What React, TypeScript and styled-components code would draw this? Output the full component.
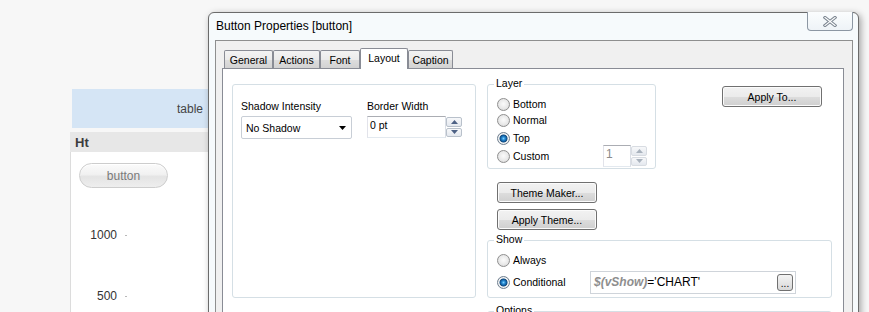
import React from 'react';
import styled, { createGlobalStyle, css } from 'styled-components';

const Global = createGlobalStyle`
  html, body { margin: 0; padding: 0; }
  body {
    background: #f7f7f7;
    font-family: "Liberation Sans", Arial, sans-serif;
    overflow: hidden;
  }
  * { box-sizing: border-box; }
`;

const Screen = styled.div`
  position: relative;
  width: 869px;
  height: 312px;
  overflow: hidden;
  background: #f7f7f7;
`;

/* ---------- background application ---------- */
const AppArea = styled.div`
  display: flex;
  flex-direction: column;
  padding: 89px 0 0 70px;
  width: 360px;
`;

const TableBar = styled.div`
  margin-left: 2px;
  height: 39px;
  background: #d5e5f5;
  display: flex;
  align-items: center;
  padding-left: 105px;
  font-size: 12px;
  color: #444;
`;

const Sheet = styled.div`
  margin-top: 4px;
  display: flex;
  flex-direction: column;
`;

const SheetHeader = styled.div`
  height: 20px;
  background: #e7e7e7;
  display: flex;
  align-items: center;
  padding-left: 5px;
  font-size: 13px;
  font-weight: bold;
  color: #3c3c3c;
`;

const SheetBody = styled.div`
  background: #fff;
  border-left: 1px solid #dcdcdc;
  height: 200px;
  display: flex;
  flex-direction: column;
`;

const PillButton = styled.div`
  margin: 11px 0 0 8px;
  width: 89px;
  height: 25px;
  border-radius: 13px;
  border: 1px solid #cdcdcd;
  background: linear-gradient(#fbfbfb 0%, #f1f1f1 45%, #e4e4e4 55%, #eeeeee 100%);
  box-shadow: inset 0 1px 0 #ffffff;
  display: flex;
  align-items: center;
  justify-content: center;
  font-size: 12px;
  color: #7a7a7a;
`;

const Axis = styled.div`
  margin-top: 40px;
  display: flex;
  flex-direction: column;
`;

const AxisRow = styled.div`
  height: 61px;
  display: flex;
  align-items: flex-start;
`;

const AxisLabel = styled.span`
  width: 46px;
  text-align: right;
  font-size: 12px;
  line-height: 14px;
  color: #333;
`;

const Tick = styled.span`
  margin: 7px 0 0 8px;
  width: 2px;
  height: 1px;
  background: #b8b8b8;
`;

/* ---------- dialog window ---------- */
const Dialog = styled.div`
  position: absolute;
  left: 208px;
  top: 12px;
  width: 651px;
  height: 320px;
  border: 1px solid #6b6b6b;
  border-radius: 6px 6px 0 0;
  background: #f6fafc;
  box-shadow: 2px 2px 7px rgba(0, 0, 0, 0.35);
  display: flex;
  flex-direction: column;
  font-size: 10.5px;
  color: #000;
`;

const TitleBar = styled.div`
  flex: none;
  height: 27px;
  display: flex;
  align-items: flex-start;
  padding-left: 7px;
`;

const Title = styled.span`
  font-size: 12px;
  line-height: 14px;
  margin-top: 6px;
  color: #000;
`;

const CloseButton = styled.div`
  margin: -1px 5px 0 auto;
  width: 46px;
  height: 19px;
  border: 1px solid #8c97a3;
  border-top: none;
  border-radius: 0 0 4px 4px;
  background: linear-gradient(#fbfdfe, #eef3f7);
  display: flex;
  align-items: center;
  justify-content: center;
`;

const Frame = styled.div`
  flex: 1;
  min-height: 0;
  margin: 0 5px 0 6px;
  border: 1px solid #8e8f8f;
  border-bottom: none;
  background: #f0f0f0;
  padding: 7px 8px 0 6px;
  display: flex;
  flex-direction: column;
`;

const TabStrip = styled.div`
  flex: none;
  margin-left: 2px;
  height: 20px;
  display: flex;
  align-items: flex-end;
`;

const Tab = styled.div<{ $active?: boolean; $w: number }>`
  width: ${p => p.$w}px;
  height: 18px;
  border: 1px solid #898c95;
  border-bottom: none;
  border-radius: 2px 2px 0 0;
  background: linear-gradient(#f3f3f3 0%, #ebebeb 50%, #dedede 51%, #d2d2d2 100%);
  display: flex;
  align-items: center;
  justify-content: center;
  font-size: 10.5px;
  ${p =>
    p.$active &&
    css`
      height: 21px;
      margin-bottom: -1px;
      background: #fff;
      position: relative;
      z-index: 1;
      padding-bottom: 3px;
    `}
`;

const Panel = styled.div`
  flex: 1;
  min-height: 0;
  background: #fff;
  border: 1px solid #898c95;
  padding: 15px 9px;
  display: flex;
  align-items: flex-start;
  gap: 11px;
`;

const GroupBox = styled.div<{ $w: number; $h: number; $mt?: number }>`
  position: relative;
  width: ${p => p.$w}px;
  height: ${p => p.$h}px;
  margin-top: ${p => p.$mt ?? 0}px;
  flex: none;
  border: 1px solid #d5dfe5;
  border-radius: 3px;
  display: flex;
  flex-direction: column;
`;

const Legend = styled.span`
  position: absolute;
  top: -8px;
  left: 6px;
  padding: 0 2px;
  background: #fff;
  line-height: 13px;
`;

const ShadowGroupInner = styled.div`
  padding: 15px 0 0 8px;
  display: flex;
  gap: 15px;
`;

const Field = styled.div`
  display: flex;
  flex-direction: column;
`;

const FieldLabel = styled.span`
  line-height: 13px;
  margin-bottom: 3px;
`;

const Combo = styled.div`
  width: 111px;
  height: 23px;
  border: 1px solid #c8ced6;
  border-radius: 2px;
  display: flex;
  align-items: center;
  padding: 0 5px 0 4px;
  justify-content: space-between;
`;

const SpinBox = styled.div`
  display: flex;
  height: 22px;
`;

const Edit = styled.div<{ $w: number; $disabled?: boolean }>`
  width: ${p => p.$w}px;
  height: 100%;
  border: 1px solid;
  border-color: #abadb3 #dbdfe6 #e3e9ef #e2e3ea;
  padding: 2px 0 0 2px;
  line-height: 13px;
  color: ${p => (p.$disabled ? '#8a8a8a' : '#000')};
  font-size: ${p => (p.$disabled ? '12px' : '10.5px')};
`;

const SpinButtons = styled.div`
  width: 16px;
  height: 100%;
  display: flex;
  flex-direction: column;
  gap: 1px;
  padding: 1px 0;
`;

const SpinButton = styled.div<{ $disabled?: boolean }>`
  flex: 1;
  border: 1px solid ${p => (p.$disabled ? '#d8dce2' : '#b9c1cb')};
  border-radius: 2px;
  background: linear-gradient(#f7f8fa, #e4e8ee);
  display: flex;
  align-items: center;
  justify-content: center;
`;

const RightColumn = styled.div`
  width: 345px;
  display: flex;
  flex-direction: column;
`;

const TopRow = styled.div`
  display: flex;
  align-items: flex-start;
`;

const RadioList = styled.div`
  padding: 11px 8px 0 9px;
  display: flex;
  flex-direction: column;
`;

const RadioRow = styled.div<{ $h?: number; $mt?: number }>`
  height: ${p => p.$h ?? 17}px;
  margin-top: ${p => p.$mt ?? 0}px;
  display: flex;
  align-items: center;
`;

const RadioDot = styled.span<{ $checked?: boolean }>`
  flex: none;
  width: 13px;
  height: 13px;
  border-radius: 50%;
  border: 1px solid #8f8f8f;
  background: radial-gradient(circle at 50% 45%, #fbfbfb 0%, #e9e9e9 55%, #cfcfcf 100%);
  margin-right: 3px;
  ${p =>
    p.$checked &&
    css`
      border-color: #6f7f90;
      background: radial-gradient(
        circle at 50% 50%,
        #7fd0ff 0px,
        #2b8ed4 1.5px,
        #0d5a9e 3px,
        #1c4f7c 3.6px,
        #e9eef2 4.4px,
        #f3f3f3 5px,
        #d3d3d3 6px
      );
    `}
`;

const RadioLabel = styled.span<{ $w?: number }>`
  line-height: 13px;
  ${p => p.$w && css`width: ${p.$w}px;`}
`;

const CustomSpin = styled.div`
  margin-left: auto;
  display: flex;
  height: 22px;
`;

const PushButton = styled.div<{ $w: number; $mt?: number; $ml?: number }>`
  flex: none;
  width: ${p => p.$w}px;
  height: 21px;
  margin-top: ${p => p.$mt ?? 0}px;
  margin-left: ${p => p.$ml ?? 0}px;
  border: 1px solid #707070;
  border-radius: 3px;
  background: linear-gradient(#f2f2f2 0%, #ebebeb 50%, #dddddd 51%, #cfcfcf 100%);
  box-shadow: inset 0 0 0 1px #fbfbfb;
  display: flex;
  align-items: center;
  justify-content: center;
  font-size: 10.5px;
`;

const ExprEdit = styled.div`
  width: 206px;
  height: 23px;
  border: 1px solid #cfd4da;
  display: flex;
  align-items: center;
  padding: 0 2px 0 3px;
  font-size: 12px;
`;

const ExprVar = styled.span`
  font-style: italic;
  font-weight: bold;
  color: #8e8e8e;
`;

const EllipsisButton = styled.div`
  margin-left: auto;
  width: 16px;
  height: 17px;
  border: 1px solid #707070;
  border-radius: 3px;
  background: linear-gradient(#f4f4f4, #d8d8d8);
  display: flex;
  align-items: flex-end;
  justify-content: center;
  font-size: 10px;
  line-height: 12px;
`;

const UpArrow = ({ color = '#4d6185' }: { color?: string }) => (
  <svg width="7" height="4" viewBox="0 0 7 4">
    <polygon points="0,4 7,4 3.5,0" fill={color} />
  </svg>
);
const DownArrow = ({ color = '#4d6185' }: { color?: string }) => (
  <svg width="7" height="4" viewBox="0 0 7 4">
    <polygon points="0,0 7,0 3.5,4" fill={color} />
  </svg>
);

const ComboArrow = () => (
  <svg width="7" height="4" viewBox="0 0 7 4">
    <polygon points="0,0 7,0 3.5,4" fill="#000" />
  </svg>
);

const CloseIcon = () => (
  <svg width="14" height="11" viewBox="0 0 14 11">
    <path d="M2 1.5 L12 9.5 M12 1.5 L2 9.5" stroke="#7d8792" strokeWidth="3.2" strokeLinecap="square" />
    <path d="M2 1.5 L12 9.5 M12 1.5 L2 9.5" stroke="#ffffff" strokeWidth="1.2" strokeLinecap="square" />
  </svg>
);

const tabs: { label: string; w: number }[] = [
  { label: 'General', w: 49 },
  { label: 'Actions', w: 47 },
  { label: 'Font', w: 40 },
  { label: 'Layout', w: 48 },
  { label: 'Caption', w: 45 },
];

export default function App() {
  return (
    <>
      <Global />
      <Screen>
        <AppArea>
          <TableBar>table</TableBar>
          <Sheet>
            <SheetHeader>Ht</SheetHeader>
            <SheetBody>
              <PillButton>button</PillButton>
              <Axis>
                <AxisRow>
                  <AxisLabel>1000</AxisLabel>
                  <Tick />
                </AxisRow>
                <AxisRow>
                  <AxisLabel>500</AxisLabel>
                  <Tick />
                </AxisRow>
              </Axis>
            </SheetBody>
          </Sheet>
        </AppArea>

        <Dialog>
          <TitleBar>
            <Title>Button Properties [button]</Title>
            <CloseButton>
              <CloseIcon />
            </CloseButton>
          </TitleBar>
          <Frame>
            <TabStrip>
              {tabs.map(t => (
                <Tab key={t.label} $w={t.w} $active={t.label === 'Layout'}>
                  {t.label}
                </Tab>
              ))}
            </TabStrip>
            <Panel>
              <GroupBox $w={244} $h={214}>
                <ShadowGroupInner>
                  <Field>
                    <FieldLabel>Shadow Intensity</FieldLabel>
                    <Combo>
                      <span>No Shadow</span>
                      <ComboArrow />
                    </Combo>
                  </Field>
                  <Field>
                    <FieldLabel>Border Width</FieldLabel>
                    <SpinBox>
                      <Edit $w={79}>0 pt</Edit>
                      <SpinButtons>
                        <SpinButton>
                          <UpArrow />
                        </SpinButton>
                        <SpinButton>
                          <DownArrow />
                        </SpinButton>
                      </SpinButtons>
                    </SpinBox>
                  </Field>
                </ShadowGroupInner>
              </GroupBox>

              <RightColumn>
                <TopRow>
                  <GroupBox $w={169} $h={85}>
                    <Legend>Layer</Legend>
                    <RadioList>
                      <RadioRow $h={16}>
                        <RadioDot />
                        <RadioLabel>Bottom</RadioLabel>
                      </RadioRow>
                      <RadioRow>
                        <RadioDot />
                        <RadioLabel>Normal</RadioLabel>
                      </RadioRow>
                      <RadioRow $h={18}>
                        <RadioDot $checked />
                        <RadioLabel>Top</RadioLabel>
                      </RadioRow>
                      <RadioRow $h={18}>
                        <RadioDot />
                        <RadioLabel>Custom</RadioLabel>
                        <CustomSpin>
                          <Edit $w={28} $disabled>1</Edit>
                          <SpinButtons>
                            <SpinButton $disabled>
                              <UpArrow color="#a9b2bd" />
                            </SpinButton>
                            <SpinButton $disabled>
                              <DownArrow color="#a9b2bd" />
                            </SpinButton>
                          </SpinButtons>
                        </CustomSpin>
                      </RadioRow>
                    </RadioList>
                  </GroupBox>
                  <PushButton $w={100} $mt={2} $ml={66}>
                    Apply To...
                  </PushButton>
                </TopRow>

                <PushButton $w={100} $mt={13} $ml={10}>
                  Theme Maker...
                </PushButton>
                <PushButton $w={100} $mt={6} $ml={10}>
                  Apply Theme...
                </PushButton>

                <GroupBox $w={345} $h={58} $mt={10}>
                  <Legend>Show</Legend>
                  <RadioList>
                    <RadioRow>
                      <RadioDot />
                      <RadioLabel>Always</RadioLabel>
                    </RadioRow>
                    <RadioRow $h={24} $mt={1}>
                      <RadioDot $checked />
                      <RadioLabel $w={77}>Conditional</RadioLabel>
                      <ExprEdit>
                        <ExprVar>$(vShow)</ExprVar>
                        <span>='CHART'</span>
                        <EllipsisButton>...</EllipsisButton>
                      </ExprEdit>
                    </RadioRow>
                  </RadioList>
                </GroupBox>

                <GroupBox $w={345} $h={60} $mt={13}>
                  <Legend>Options</Legend>
                </GroupBox>
              </RightColumn>
            </Panel>
          </Frame>
        </Dialog>
      </Screen>
    </>
  );
}
